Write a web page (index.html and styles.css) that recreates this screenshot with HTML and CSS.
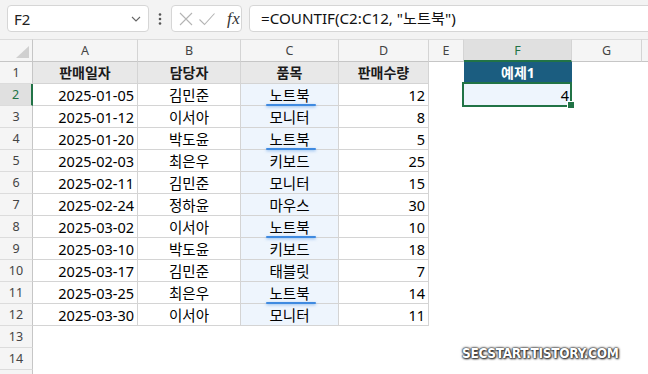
FILE: index.html
```html
<!DOCTYPE html>
<html lang="ko">
<head>
<meta charset="utf-8">
<title>Excel COUNTIF</title>
<link rel="stylesheet" href="styles.css">
</head>
<body>
<div class="app">
  <div class="fbar">
    <div class="namebox"><span class="ref">F2</span>
      <svg class="chev" width="10" height="6" viewBox="0 0 10 6"><path d="M1 1 L5 5 L9 1" fill="none" stroke="#666" stroke-width="1.1"/></svg>
    </div>
    <div class="sep"><svg width="4" height="14" viewBox="0 0 4 14"><circle cx="2" cy="2.5" r="1.3" fill="#555"/><circle cx="2" cy="7" r="1.3" fill="#555"/><circle cx="2" cy="11.5" r="1.3" fill="#555"/></svg></div>
    <div class="fxbox">
      <svg class="ico" width="16" height="16" viewBox="0 0 16 16"><path d="M2 2 L14 14 M14 2 L2 14" stroke="#b4b4b4" stroke-width="1.1" fill="none"/></svg>
      <svg class="ico" width="18" height="16" viewBox="0 0 18 16"><path d="M1.5 8.5 L6.5 13.5 L16.5 2.5" stroke="#b4b4b4" stroke-width="1.1" fill="none"/></svg>
      <span class="fx">fx</span>
    </div>
    <div class="formula">=COUNTIF(C2:C12, "노트북")</div>
  </div>

  <div class="sheet">
    <div class="ch corner"><span class="tri"></span></div>
    <div class="ch">A</div><div class="ch">B</div><div class="ch">C</div><div class="ch">D</div><div class="ch">E</div><div class="ch csel">F</div><div class="ch">G</div><div class="ch fill"></div>

    <div class="rh">1</div>
    <div class="t hd">판매일자</div><div class="t hd">담당자</div><div class="t hd">품목</div><div class="t hd">판매수량</div><div class="x"></div><div class="t ex">예제1</div><div class="x"></div><div class="x"></div>

    <div class="rh rsel">2</div>
    <div class="t r">2025-01-05</div><div class="t m">김민준</div><div class="t m c ul">노트북</div><div class="t r">12</div><div class="x"></div><div class="t r c sel">4</div><div class="x"></div><div class="x"></div>

    <div class="rh">3</div>
    <div class="t r">2025-01-12</div><div class="t m">이서아</div><div class="t m c">모니터</div><div class="t r">8</div><div class="x"></div><div class="x"></div><div class="x"></div><div class="x"></div>

    <div class="rh">4</div>
    <div class="t r">2025-01-20</div><div class="t m">박도윤</div><div class="t m c ul">노트북</div><div class="t r">5</div><div class="x"></div><div class="x"></div><div class="x"></div><div class="x"></div>

    <div class="rh">5</div>
    <div class="t r">2025-02-03</div><div class="t m">최은우</div><div class="t m c">키보드</div><div class="t r">25</div><div class="x"></div><div class="x"></div><div class="x"></div><div class="x"></div>

    <div class="rh">6</div>
    <div class="t r">2025-02-11</div><div class="t m">김민준</div><div class="t m c">모니터</div><div class="t r">15</div><div class="x"></div><div class="x"></div><div class="x"></div><div class="x"></div>

    <div class="rh">7</div>
    <div class="t r">2025-02-24</div><div class="t m">정하윤</div><div class="t m c">마우스</div><div class="t r">30</div><div class="x"></div><div class="x"></div><div class="x"></div><div class="x"></div>

    <div class="rh">8</div>
    <div class="t r">2025-03-02</div><div class="t m">이서아</div><div class="t m c ul">노트북</div><div class="t r">10</div><div class="x"></div><div class="x"></div><div class="x"></div><div class="x"></div>

    <div class="rh">9</div>
    <div class="t r">2025-03-10</div><div class="t m">박도윤</div><div class="t m c">키보드</div><div class="t r">18</div><div class="x"></div><div class="x"></div><div class="x"></div><div class="x"></div>

    <div class="rh">10</div>
    <div class="t r">2025-03-17</div><div class="t m">김민준</div><div class="t m c">태블릿</div><div class="t r">7</div><div class="x"></div><div class="x"></div><div class="x"></div><div class="x"></div>

    <div class="rh">11</div>
    <div class="t r">2025-03-25</div><div class="t m">최은우</div><div class="t m c ul">노트북</div><div class="t r">14</div><div class="x"></div><div class="x"></div><div class="x"></div><div class="x"></div>

    <div class="rh">12</div>
    <div class="t r">2025-03-30</div><div class="t m">이서아</div><div class="t m c">모니터</div><div class="t r">11</div><div class="x"></div><div class="x"></div><div class="x"></div><div class="x"></div>

    <div class="rh">13</div>
    <div class="x"></div><div class="x"></div><div class="x"></div><div class="x"></div><div class="x"></div><div class="x"></div><div class="x"></div><div class="x"></div>

    <div class="rh">14</div>
    <div class="x"></div><div class="x"></div><div class="x"></div><div class="x"></div><div class="x"></div><div class="x"></div><div class="x"></div><div class="x"></div>

    <div class="rh"></div>
    <div class="x"></div><div class="x"></div><div class="x"></div><div class="x"></div><div class="x"></div><div class="x"></div><div class="x"></div><div class="x"></div>
  </div>

  <div class="wm">SECSTART.TISTORY.COM</div>
</div>
</body>
</html>
```

FILE: styles.css
```css
* { box-sizing: border-box; }
html, body {
  margin: 0;
  padding: 0;
  width: 648px;
  height: 374px;
  overflow: hidden;
  background: #ffffff;
}
body {
  font-family: "Noto Sans", "Noto Sans CJK KR", sans-serif;
  color: #000;
}
.app {
  position: relative;
  width: 648px;
  height: 374px;
  overflow: hidden;
}

/* formula bar */
.fbar {
  height: 39px;
  background: #f3f3f3;
  display: flex;
  align-items: flex-start;
  padding: 5px 0 0 7px;
}
.namebox {
  width: 142px;
  height: 27px;
  background: #fff;
  border: 1px solid #d6d6d6;
  border-radius: 4px;
  display: flex;
  align-items: center;
  justify-content: space-between;
  padding: 0 7px 0 6px;
}
.ref {
  font-size: 15px;
  color: #222;
}
.sep {
  width: 22px;
  height: 27px;
  display: flex;
  align-items: center;
  justify-content: center;
}
.fxbox {
  width: 71px;
  height: 27px;
  background: #fff;
  border: 1px solid #d6d6d6;
  border-radius: 4px;
  display: flex;
  align-items: center;
  padding: 0 0 0 6px;
  gap: 4px;
}
.fx {
  font-family: "Liberation Serif", serif;
  font-style: italic;
  font-size: 17px;
  color: #333;
  margin-left: 7px;
  letter-spacing: 0.5px;
}
.formula {
  flex: 1;
  margin-left: 7px;
  margin-right: -20px;
  height: 27px;
  background: #fff;
  border: 1px solid #d6d6d6;
  border-radius: 4px;
  padding-left: 11px;
  font-size: 15.2px;
  line-height: 25px;
  color: #111;
  white-space: nowrap;
}

/* sheet grid */
.sheet {
  display: grid;
  grid-template-columns: 33px 105px 103px 98px 90px 35px 108px 70px 1fr;
  grid-template-rows: 23px;
  grid-auto-rows: 22px;
}
.ch {
  background: #f5f5f5;
  border-top: 1px solid #dcdcdc;
  border-right: 1px solid #d4d4d4;
  border-bottom: 1px solid #c6c6c6;
  font-size: 12.5px;
  color: #444;
  display: flex;
  align-items: center;
  justify-content: center;
}
.ch.fill { border-right: none; }
.ch.corner {
  position: relative;
  border-right: 1px solid #c6c6c6;
}
.tri {
  position: absolute;
  right: 3px;
  bottom: 3px;
  width: 0;
  height: 0;
  border-left: 13px solid transparent;
  border-bottom: 12px solid #d0d0d0;
}
.ch.csel {
  background: #e0e0e0;
  color: #217346;
  border-bottom: 2px solid #217346;
}
.rh {
  background: #f5f5f5;
  border-right: 1px solid #c6c6c6;
  border-bottom: 1px solid #dcdcdc;
  font-size: 12.5px;
  color: #444;
  display: flex;
  align-items: center;
  justify-content: center;
}
.rh.rsel {
  background: #e0e0e0;
  color: #217346;
  border-right: 2px solid #217346;
}
.x { background: #fff; }
.t {
  background: #fff;
  border-right: 1px solid #d4d4d4;
  border-bottom: 1px solid #d4d4d4;
  font-size: 14.5px;
  line-height: 22px;
  padding: 0 3px;
  white-space: nowrap;
  overflow: visible;
}
.t.r { text-align: right; }
.t.m { text-align: center; }
.t.hd {
  background: #e8e8e8;
  font-weight: 700;
  text-align: center;
  color: #1a1a1a;
  font-size: 14px;
}
.t.ex {
  background: #1b5d80;
  color: #fff;
  font-weight: 700;
  text-align: center;
  font-size: 14px;
  border-right: none;
  border-bottom: none;
}
.t.c { background: #eef5fd; }
.t.ul { position: relative; }
.t.ul::after {
  content: "";
  position: absolute;
  left: 25px;
  width: 50px;
  bottom: -1px;
  height: 2px;
  border-radius: 1px;
  background: #3f8ae0;
  box-shadow: 0 1px 3px rgba(63, 138, 224, 0.55);
  z-index: 2;
}
.t.sel {
  position: relative;
  border: none;
}
.t.sel::before {
  content: "";
  position: absolute;
  left: -2px;
  top: -2px;
  right: 0;
  bottom: -1px;
  border: 2px solid #217346;
  z-index: 3;
}
.t.sel::after {
  content: "";
  position: absolute;
  right: -3px;
  bottom: -3px;
  width: 6px;
  height: 6px;
  background: #217346;
  border: 1px solid #fff;
  z-index: 4;
}

/* watermark */
.wm {
  position: absolute;
  left: 462px;
  top: 345px;
  font-family: "DejaVu Sans Condensed", "DejaVu Sans", sans-serif;
  font-weight: 700;
  font-size: 13.5px;
  letter-spacing: -0.3px;
  color: #fff;
  text-shadow: 0 0 1px #222, 0 0 2px #222, 0 0 3px #444, 1px 1px 2px #333;
}
```
